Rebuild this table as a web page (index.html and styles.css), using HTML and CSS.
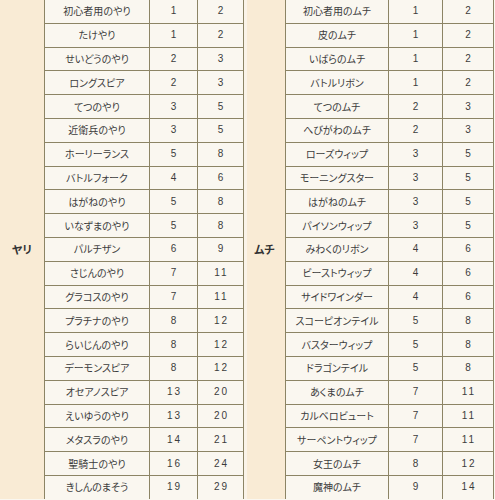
FILE: index.html
```html
<!DOCTYPE html>
<html lang="ja">
<head>
<meta charset="utf-8">
<link rel="stylesheet" href="styles.css">
</head>
<body>
<div class="weapons">
<div class="label label-left">ヤリ</div>
<div class="label label-right">ムチ</div>
<div class="c">初心者用のやり</div><div class="c n">1</div><div class="c n">2</div><div class="c">初心者用のムチ</div><div class="c n">1</div><div class="c n">2</div>
<div class="c">たけやり</div><div class="c n">1</div><div class="c n">2</div><div class="c">皮のムチ</div><div class="c n">1</div><div class="c n">2</div>
<div class="c">せいどうのやり</div><div class="c n">2</div><div class="c n">3</div><div class="c">いばらのムチ</div><div class="c n">1</div><div class="c n">2</div>
<div class="c">ロングスピア</div><div class="c n">2</div><div class="c n">3</div><div class="c">バトルリボン</div><div class="c n">1</div><div class="c n">2</div>
<div class="c">てつのやり</div><div class="c n">3</div><div class="c n">5</div><div class="c">てつのムチ</div><div class="c n">2</div><div class="c n">3</div>
<div class="c">近衛兵のやり</div><div class="c n">3</div><div class="c n">5</div><div class="c">へびがわのムチ</div><div class="c n">2</div><div class="c n">3</div>
<div class="c">ホーリーランス</div><div class="c n">5</div><div class="c n">8</div><div class="c">ローズウィップ</div><div class="c n">3</div><div class="c n">5</div>
<div class="c">バトルフォーク</div><div class="c n">4</div><div class="c n">6</div><div class="c">モーニングスター</div><div class="c n">3</div><div class="c n">5</div>
<div class="c">はがねのやり</div><div class="c n">5</div><div class="c n">8</div><div class="c">はがねのムチ</div><div class="c n">3</div><div class="c n">5</div>
<div class="c">いなずまのやり</div><div class="c n">5</div><div class="c n">8</div><div class="c">パイソンウィップ</div><div class="c n">3</div><div class="c n">5</div>
<div class="c">パルチザン</div><div class="c n">6</div><div class="c n">9</div><div class="c">みわくのリボン</div><div class="c n">4</div><div class="c n">6</div>
<div class="c">さじんのやり</div><div class="c n">7</div><div class="c n">11</div><div class="c">ビーストウィップ</div><div class="c n">4</div><div class="c n">6</div>
<div class="c">グラコスのやり</div><div class="c n">7</div><div class="c n">11</div><div class="c">サイドワインダー</div><div class="c n">4</div><div class="c n">6</div>
<div class="c">プラチナのやり</div><div class="c n">8</div><div class="c n">12</div><div class="c">スコーピオンテイル</div><div class="c n">5</div><div class="c n">8</div>
<div class="c">らいじんのやり</div><div class="c n">8</div><div class="c n">12</div><div class="c">バスターウィップ</div><div class="c n">5</div><div class="c n">8</div>
<div class="c">デーモンスピア</div><div class="c n">8</div><div class="c n">12</div><div class="c">ドラゴンテイル</div><div class="c n">5</div><div class="c n">8</div>
<div class="c">オセアノスピア</div><div class="c n">13</div><div class="c n">20</div><div class="c">あくまのムチ</div><div class="c n">7</div><div class="c n">11</div>
<div class="c">えいゆうのやり</div><div class="c n">13</div><div class="c n">20</div><div class="c">カルベロビュート</div><div class="c n">7</div><div class="c n">11</div>
<div class="c">メタスラのやり</div><div class="c n">14</div><div class="c n">21</div><div class="c">サーペントウィップ</div><div class="c n">7</div><div class="c n">11</div>
<div class="c">聖騎士のやり</div><div class="c n">16</div><div class="c n">24</div><div class="c">女王のムチ</div><div class="c n">8</div><div class="c n">12</div>
<div class="c">きしんのまそう</div><div class="c n">19</div><div class="c n">29</div><div class="c">魔神のムチ</div><div class="c n">9</div><div class="c n">14</div>
</div>
</body>
</html>
```
FILE: styles.css
```css
html, body {
  margin: 0;
  padding: 0;
  background: #faf7f0;
  overflow: hidden;
}

.weapons {
  display: grid;
  grid-template-columns: 44px 104px 47px 45px 41px 102px 53px 50px;
  grid-auto-rows: 22.8px;
  gap: 1px;
  padding: 1px 1px 0 1px;
  margin: -1px 0 0 -1px;
  width: max-content;
  background: #8c8465;
  font-family: "Noto Sans CJK JP", sans-serif;
  font-size: 10px;
  font-feature-settings: "palt";
  color: #3c3c3c;
}

.c {
  background: #faf7f0;
  display: flex;
  align-items: center;
  justify-content: center;
  line-height: 1;
  white-space: nowrap;
}

.n {
  font-family: "Liberation Sans", sans-serif;
  letter-spacing: 2px;
  padding-left: 2px;
}

.label {
  grid-row: 1 / span 21;
  background: #f9ebd5;
  display: flex;
  align-items: center;
  justify-content: center;
  font-weight: bold;
  font-size: 11px;
  color: #333;
}

.label-left {
  grid-column: 1;
}

.label-right {
  grid-column: 5;
  background: linear-gradient(to right, #faf3e8 0, #faf3e8 3px, #f9ebd5 3px);
}
```
